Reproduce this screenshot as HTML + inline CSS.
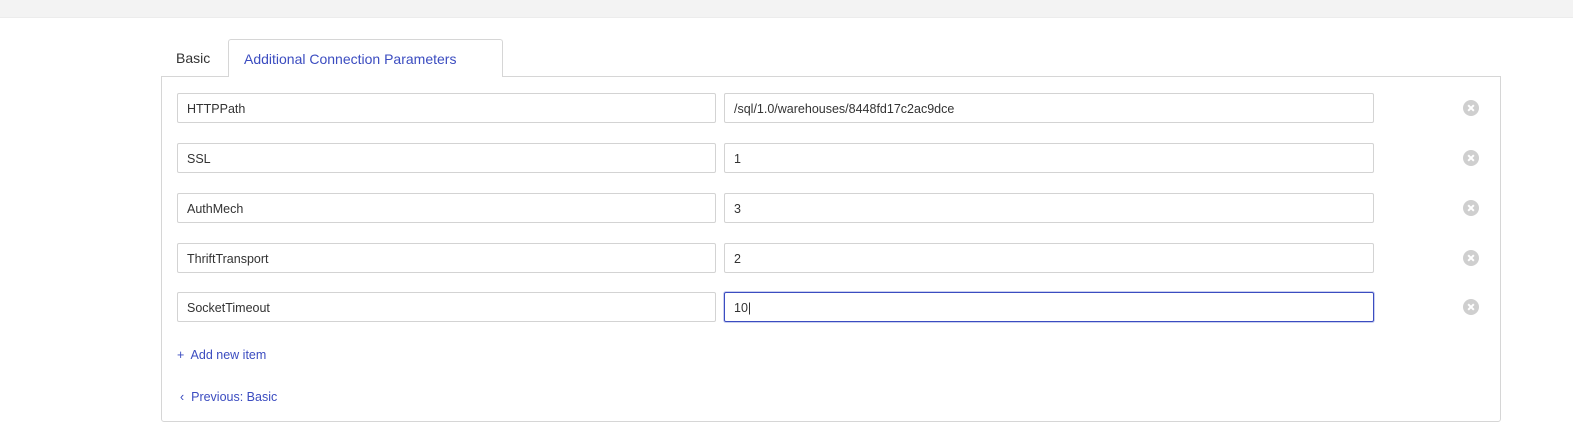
<!DOCTYPE html>
<html><head><style>
*{box-sizing:border-box;margin:0;padding:0}
body{width:1573px;height:436px;background:#fff;font-family:"Liberation Sans",sans-serif;position:relative;overflow:hidden}
.top{position:absolute;left:0;top:0;width:1573px;height:18px;background:#f3f3f3;border-bottom:1px solid #ececec}
.tab{position:absolute;font-size:14px}
.active{left:228px;top:39px;width:275px;height:38px;border:1px solid #d6d6d6;border-bottom:none;border-radius:3px 3px 0 0;background:#fff;color:#3b4cc0;padding:11px 0 0 15px;z-index:2}
.panel{position:absolute;left:161px;top:76px;width:1340px;height:346px;border:1px solid #d6d6d6;border-radius:0 0 3px 3px}
.in{position:absolute;height:30px;border:1px solid #d3d3d3;border-radius:2px;font-size:12.5px;color:#333;padding:8px 0 0 9px}
.k{left:177px;width:539px}.v{left:724px;width:650px}
.x{position:absolute;left:1463px;width:16px;height:16px;border-radius:50%;background:#cfcfcf}
.x:before,.x:after{content:"";position:absolute;left:7px;top:4px;width:2px;height:8px;background:#fff;transform:rotate(45deg)}
.x:after{transform:rotate(-45deg)}
.link{position:absolute;font-size:12.5px;color:#3b4cc0}
</style></head><body>
<div class="top"></div>
<div class="tab" style="left:176px;top:50px;color:#333">Basic</div>
<div class="tab active">Additional Connection Parameters</div>
<div class="panel"></div>
<div class="in k" style="top:93px">HTTPPath</div><div class="in v" style="top:93px">/sql/1.0/warehouses/8448fd17c2ac9dce</div><div class="x" style="top:100px"></div>
<div class="in k" style="top:143px">SSL</div><div class="in v" style="top:143px">1</div><div class="x" style="top:150px"></div>
<div class="in k" style="top:193px">AuthMech</div><div class="in v" style="top:193px">3</div><div class="x" style="top:200px"></div>
<div class="in k" style="top:243px">ThriftTransport</div><div class="in v" style="top:243px">2</div><div class="x" style="top:250px"></div>
<div class="in k" style="top:292px">SocketTimeout</div><div class="in v" style="top:292px;border-color:#3b4cc0;box-shadow:0 0 0 1px #c9cff0">10|</div><div class="x" style="top:299px"></div>
<div class="link" style="left:177px;top:348px">+&nbsp; Add new item</div>
<div class="link" style="left:180px;top:390px">&#8249;&nbsp; Previous: Basic</div>
</body></html>
